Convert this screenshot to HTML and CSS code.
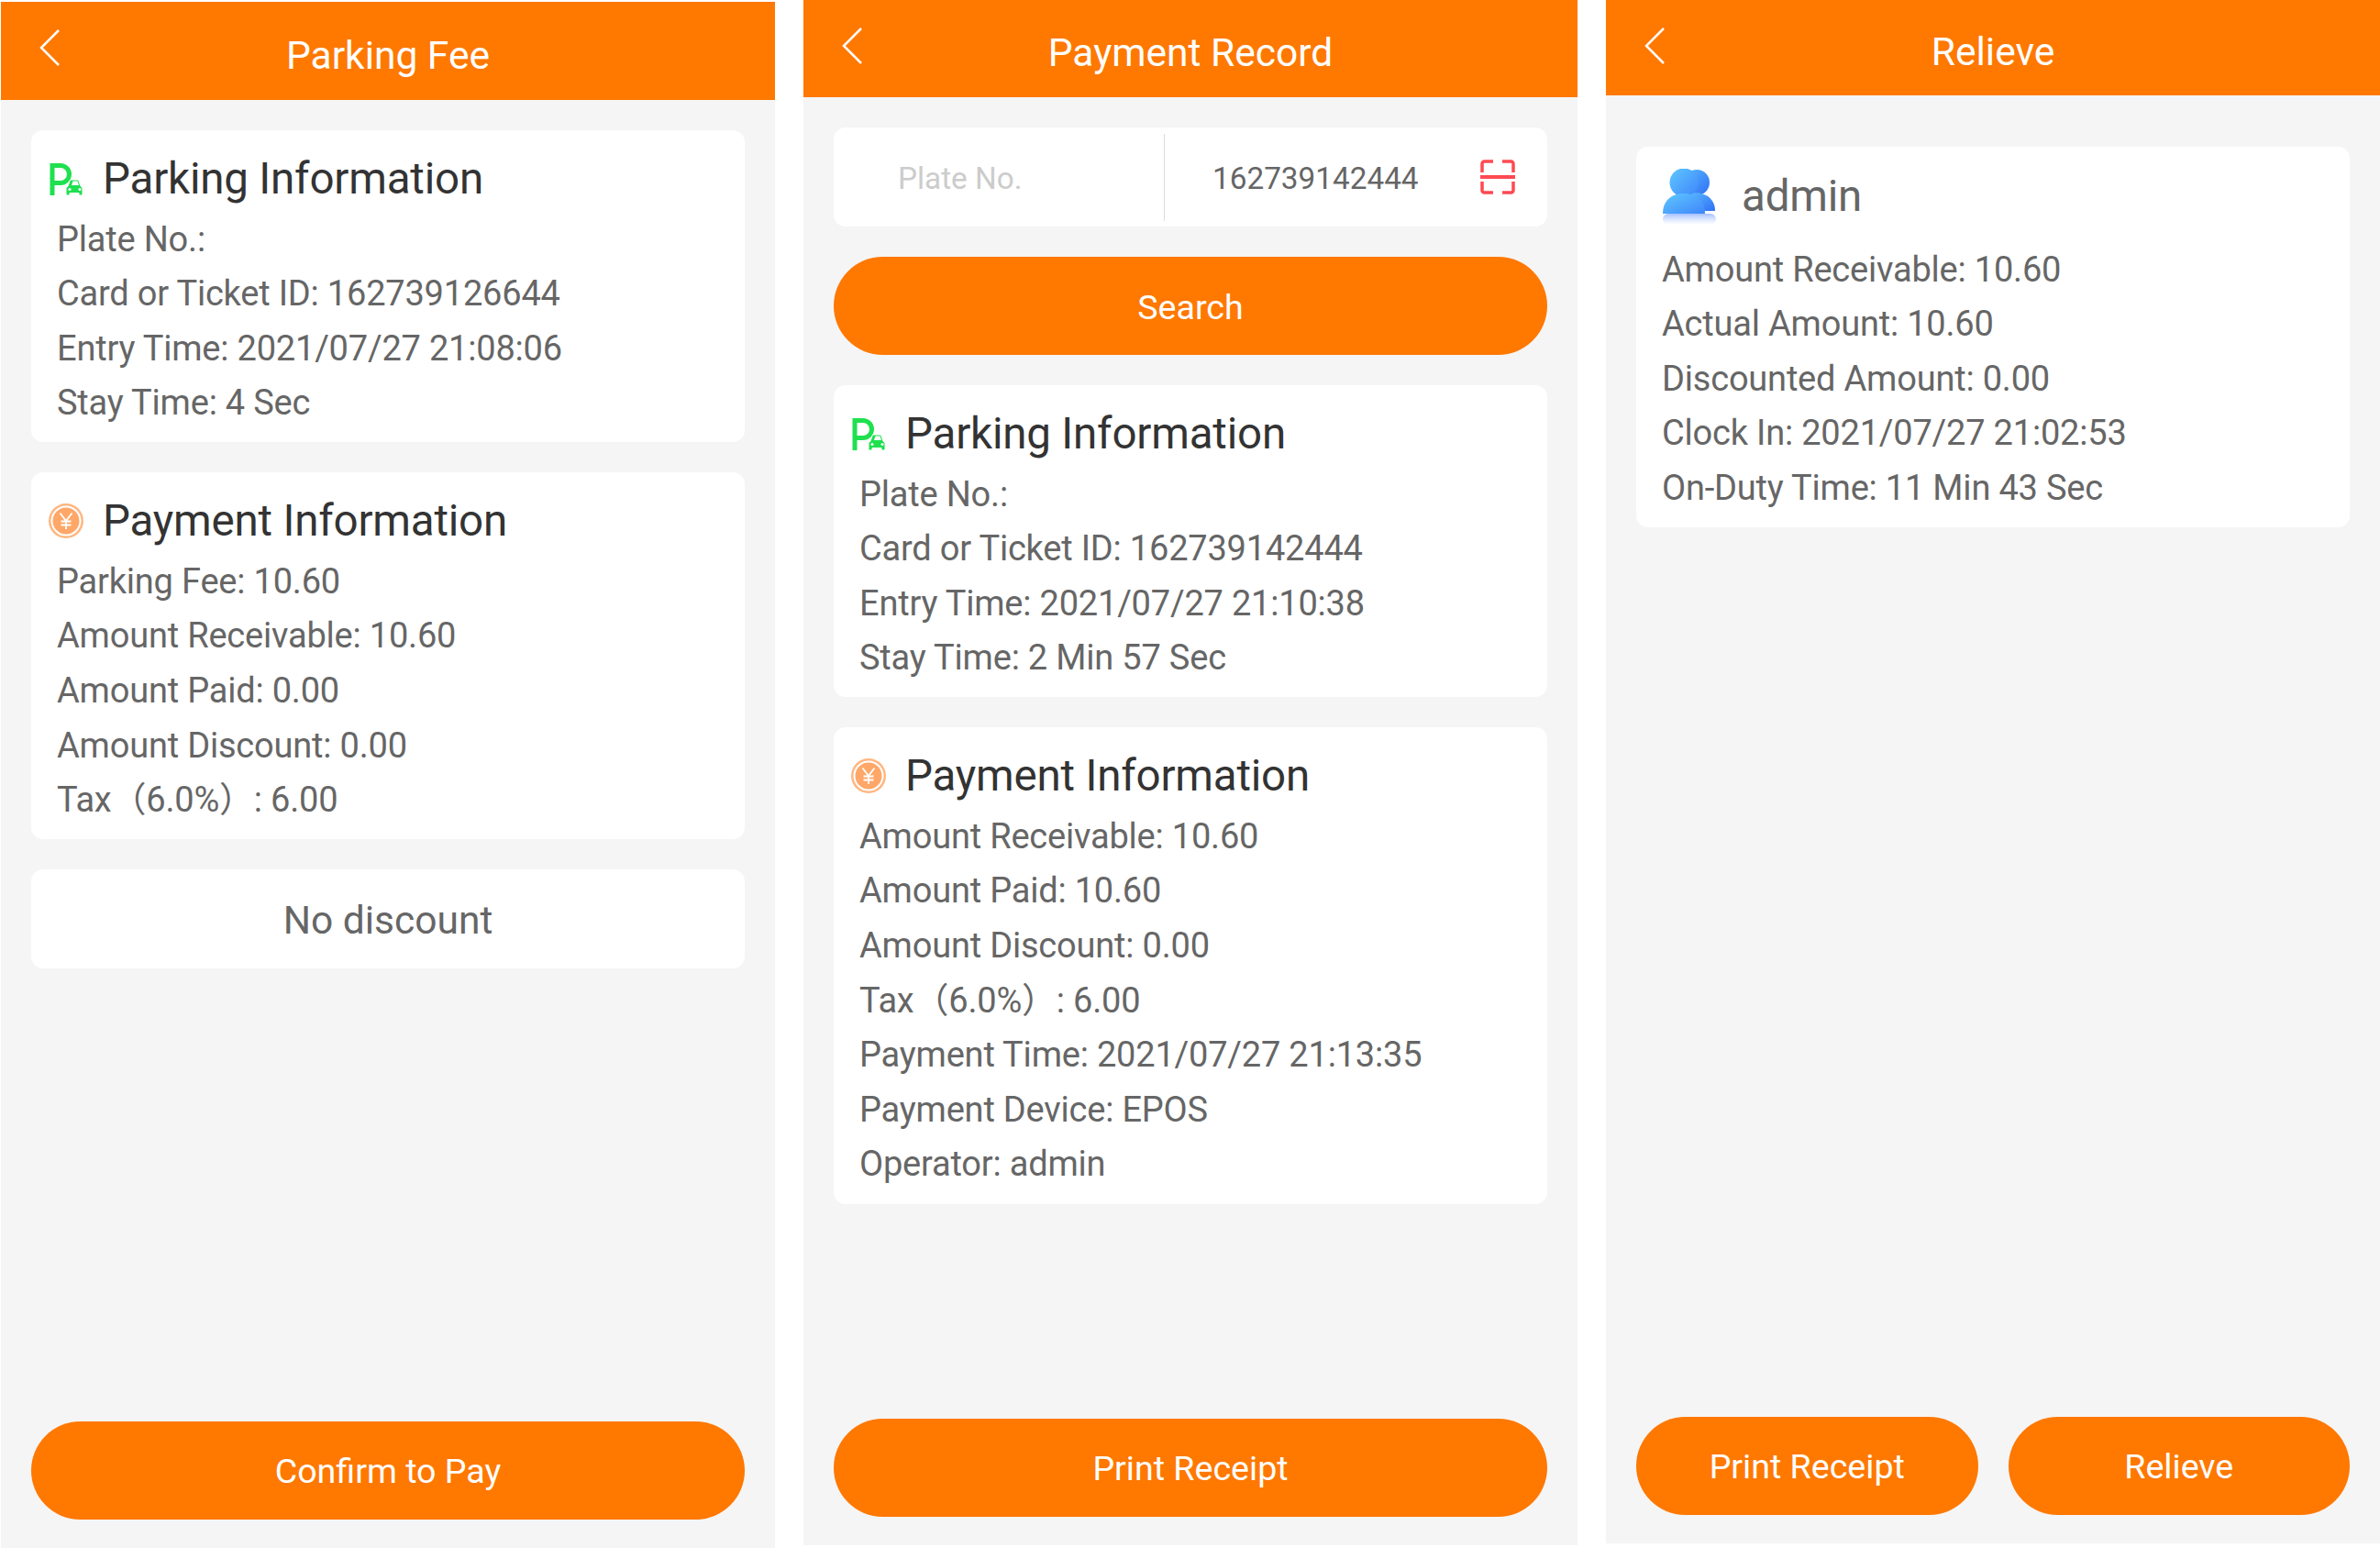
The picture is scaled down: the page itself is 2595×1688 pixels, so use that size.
FILE: index.html
```html
<!DOCTYPE html>
<html>
<head>
    <title>Parking Screens</title>
    <link rel="stylesheet" href="styles.css">
</head>
<body>
    <svg class="defs" width="0" height="0">
        <defs>
            <linearGradient id="userFront" x1="0" y1="0" x2="1" y2="1">
                <stop offset="0" stop-color="#5fc8ff"/>
                <stop offset="1" stop-color="#3f86fb"/>
            </linearGradient>
            <linearGradient id="userBack" x1="0" y1="0" x2="1" y2="1">
                <stop offset="0" stop-color="#59b8fe"/>
                <stop offset="1" stop-color="#2f70f5"/>
            </linearGradient>
            <linearGradient id="userShadow" x1="0" y1="0" x2="0" y2="1">
                <stop offset="0" stop-color="#7fa6ff" stop-opacity=".7"/>
                <stop offset="1" stop-color="#a9c4ff" stop-opacity="0"/>
            </linearGradient>
            <symbol id="icon-parking" viewBox="0 0 38 38">
                <path d="M4 37V4.500h9a9.500 9.500 0 0 1 0 19H4" fill="none" stroke="#1fe04f" stroke-width="5"/>
                <path d="M19 37V29l2-2 2.500-7h9l2.500 7 2 2v8h-4v-2.500h-10V37z" fill="#1fe04f" stroke="#fff" stroke-width="1"/>
                <path d="M25 26l1.500-4.500h5L33 26z" fill="#fff"/>
                <circle cx="23" cy="30.500" r="1.500" fill="#fff"/>
                <circle cx="34" cy="30.500" r="1.500" fill="#fff"/>
            </symbol>
            <symbol id="icon-coin" viewBox="0 0 38 38">
                <circle cx="19" cy="19" r="19" fill="#ffb680"/>
                <circle cx="19" cy="19" r="15.500" fill="#ffa768" stroke="#fff" stroke-width="2"/>
                <path d="M12.500 10.500 19 19l6.500-8.500M19 19v9M13.500 19.500h11M13.500 23.500h11" fill="none" stroke="#fff" stroke-width="1.800"/>
            </symbol>
            <symbol id="icon-user" viewBox="0 0 60 62">
                <rect x="1" y="49" width="58" height="12" rx="6" fill="url(#userShadow)"/>
                <circle cx="38" cy="15" r="14" fill="url(#userBack)"/>
                <path d="M30 46V27c16-3 28 5 28 19z" fill="url(#userBack)"/>
                <circle cx="24" cy="15" r="15.500" fill="url(#userFront)"/>
                <path d="M1 49c0-14 9-22 23-22s23 8 23 22z" fill="url(#userFront)"/>
            </symbol>
        </defs>
    </svg>

    <div class="screens">
        <!-- Parking Fee -->
        <section class="panel panel-fee">
            <header class="bar bar-fee">
                <svg class="back" viewBox="0 0 24 40"><path d="M22 1 3 20l19 19"/></svg>
                <h1>Parking Fee</h1>
            </header>
            <main class="content">
                <div class="card">
                    <h2 class="card-title"><svg class="icon"><use href="#icon-parking"/></svg>Parking Information</h2>
                    <p>Plate No.:</p>
                    <p>Card or Ticket ID: 162739126644</p>
                    <p>Entry Time: 2021/07/27 21:08:06</p>
                    <p>Stay Time: 4 Sec</p>
                </div>
                <div class="card">
                    <h2 class="card-title"><svg class="icon"><use href="#icon-coin"/></svg>Payment Information</h2>
                    <p>Parking Fee: 10.60</p>
                    <p>Amount Receivable: 10.60</p>
                    <p>Amount Paid: 0.00</p>
                    <p>Amount Discount: 0.00</p>
                    <p>Tax（6.0%）: 6.00</p>
                </div>
                <div class="card card-note">No discount</div>
                <div class="actions">
                    <button class="btn">Confirm to Pay</button>
                </div>
            </main>
        </section>

        <!-- Payment Record -->
        <section class="panel panel-record">
            <header class="bar bar-record">
                <svg class="back" viewBox="0 0 24 40"><path d="M22 1 3 20l19 19"/></svg>
                <h1>Payment Record</h1>
            </header>
            <main class="content">
                <div class="search">
                    <div class="search-plate">Plate No.</div>
                    <div class="search-ticket">
                        <span>162739142444</span>
                        <svg class="scan" viewBox="0 0 38 38"><path d="M14 2H4.500a2.500 2.500 0 0 0-2.500 2.500V14M24 2h9.500a2.500 2.500 0 0 1 2.500 2.500V14M14 36H4.500a2.500 2.500 0 0 1-2.500-2.500V24M24 36h9.500a2.500 2.500 0 0 0 2.500-2.500V24"/><path class="scan-line" d="M0 19h38"/></svg>
                    </div>
                </div>
                <button class="btn">Search</button>
                <div class="card">
                    <h2 class="card-title"><svg class="icon"><use href="#icon-parking"/></svg>Parking Information</h2>
                    <p>Plate No.:</p>
                    <p>Card or Ticket ID: 162739142444</p>
                    <p>Entry Time: 2021/07/27 21:10:38</p>
                    <p>Stay Time: 2 Min 57 Sec</p>
                </div>
                <div class="card">
                    <h2 class="card-title"><svg class="icon"><use href="#icon-coin"/></svg>Payment Information</h2>
                    <p>Amount Receivable: 10.60</p>
                    <p>Amount Paid: 10.60</p>
                    <p>Amount Discount: 0.00</p>
                    <p>Tax（6.0%）: 6.00</p>
                    <p>Payment Time: 2021/07/27 21:13:35</p>
                    <p>Payment Device: EPOS</p>
                    <p>Operator: admin</p>
                </div>
                <div class="actions">
                    <button class="btn">Print Receipt</button>
                </div>
            </main>
        </section>

        <!-- Relieve -->
        <section class="panel panel-relieve">
            <header class="bar bar-relieve">
                <svg class="back" viewBox="0 0 24 40"><path d="M22 1 3 20l19 19"/></svg>
                <h1>Relieve</h1>
            </header>
            <main class="content content-relieve">
                <div class="card">
                    <h2 class="card-title card-user"><svg class="icon-user"><use href="#icon-user"/></svg>admin</h2>
                    <p>Amount Receivable: 10.60</p>
                    <p>Actual Amount: 10.60</p>
                    <p>Discounted Amount: 0.00</p>
                    <p>Clock In: 2021/07/27 21:02:53</p>
                    <p>On-Duty Time: 11 Min 43 Sec</p>
                </div>
                <div class="actions actions-split">
                    <button class="btn">Print Receipt</button>
                    <button class="btn">Relieve</button>
                </div>
            </main>
        </section>
    </div>
</body>
</html>
```

FILE: styles.css
```css
* { box-sizing: border-box; }
html, body { margin: 0; padding: 0; background: #fff; }
body { font-family: Roboto, "Noto Sans CJK SC", sans-serif; color: #666; overflow: hidden; }
.defs { display: block; height: 0; }
.screens { display: flex; align-items: flex-start; gap: 31px; padding-left: 1px; }

.panel { width: 844px; background: #f5f5f5; display: flex; flex-direction: column; }
.panel-fee { height: 1686px; margin-top: 2px; }
.panel-record { height: 1685px; }
.panel-relieve { height: 1683px; }

.bar { background: #ff7800; color: #fff; display: flex; align-items: center; justify-content: center; position: relative; flex: none; padding-top: 8px; }
.bar-fee { height: 107px; padding-top: 10px; }
.bar-record { height: 106px; }
.bar-relieve { height: 104px; }
.bar h1 { margin: 0; font-size: 42.5px; font-weight: 400; }
.back { position: absolute; left: 41px; top: 29px; width: 24px; height: 42px; fill: none; stroke: #fff; stroke-width: 2.5; }

.content { flex: 1; display: flex; flex-direction: column; gap: 33px; padding: 33px 33px 31.5px; }
.content-relieve { padding-top: 56px; }

.card { background: #fff; border-radius: 13px; padding: 16px 28px 12.5px; }
.card p { margin: 0; font-size: 38px; line-height: 59.6px; color: #666; letter-spacing: -0.2px; }
.card-title { margin: 0 0 0 -9px; height: 73.5px; display: flex; align-items: center; gap: 21px; font-size: 47.5px; font-weight: 400; color: #333; letter-spacing: -0.2px; }
.icon { width: 38px; height: 38px; flex: none; }
.card-user { margin: 0; height: 88.5px; padding-bottom: 12px; gap: 27px; color: #666; }
.icon-user { width: 60px; height: 62px; flex: none; margin-top: 2px; }

.card-note { height: 108px; padding: 2px 0 0; display: flex; align-items: center; justify-content: center; font-size: 42.5px; }

.search { background: #fff; border-radius: 13px; height: 108px; display: flex; align-items: center; font-size: 33.3px; }
.search-plate { width: 361px; height: 95px; padding: 2px 0 0 70px; display: flex; align-items: center; color: #ccc; border-right: 1.5px solid #ddd; }
.search-ticket { flex: 1; display: flex; align-items: center; justify-content: space-between; padding: 0 35px 0 52px; color: #666; }
.search-ticket span { padding-top: 2px; }
.scan { width: 38px; height: 38px; fill: none; stroke: #ff4a52; stroke-width: 3.5; }
.scan-line { stroke-width: 4; }

.btn { display: block; width: 100%; height: 107px; border: none; border-radius: 54px; background: #ff7800; color: #fff; font-family: inherit; font-size: 37.6px; padding: 2px 0 0; }
.actions { margin-top: auto; display: flex; }
.actions-split { gap: 33px; }
```
